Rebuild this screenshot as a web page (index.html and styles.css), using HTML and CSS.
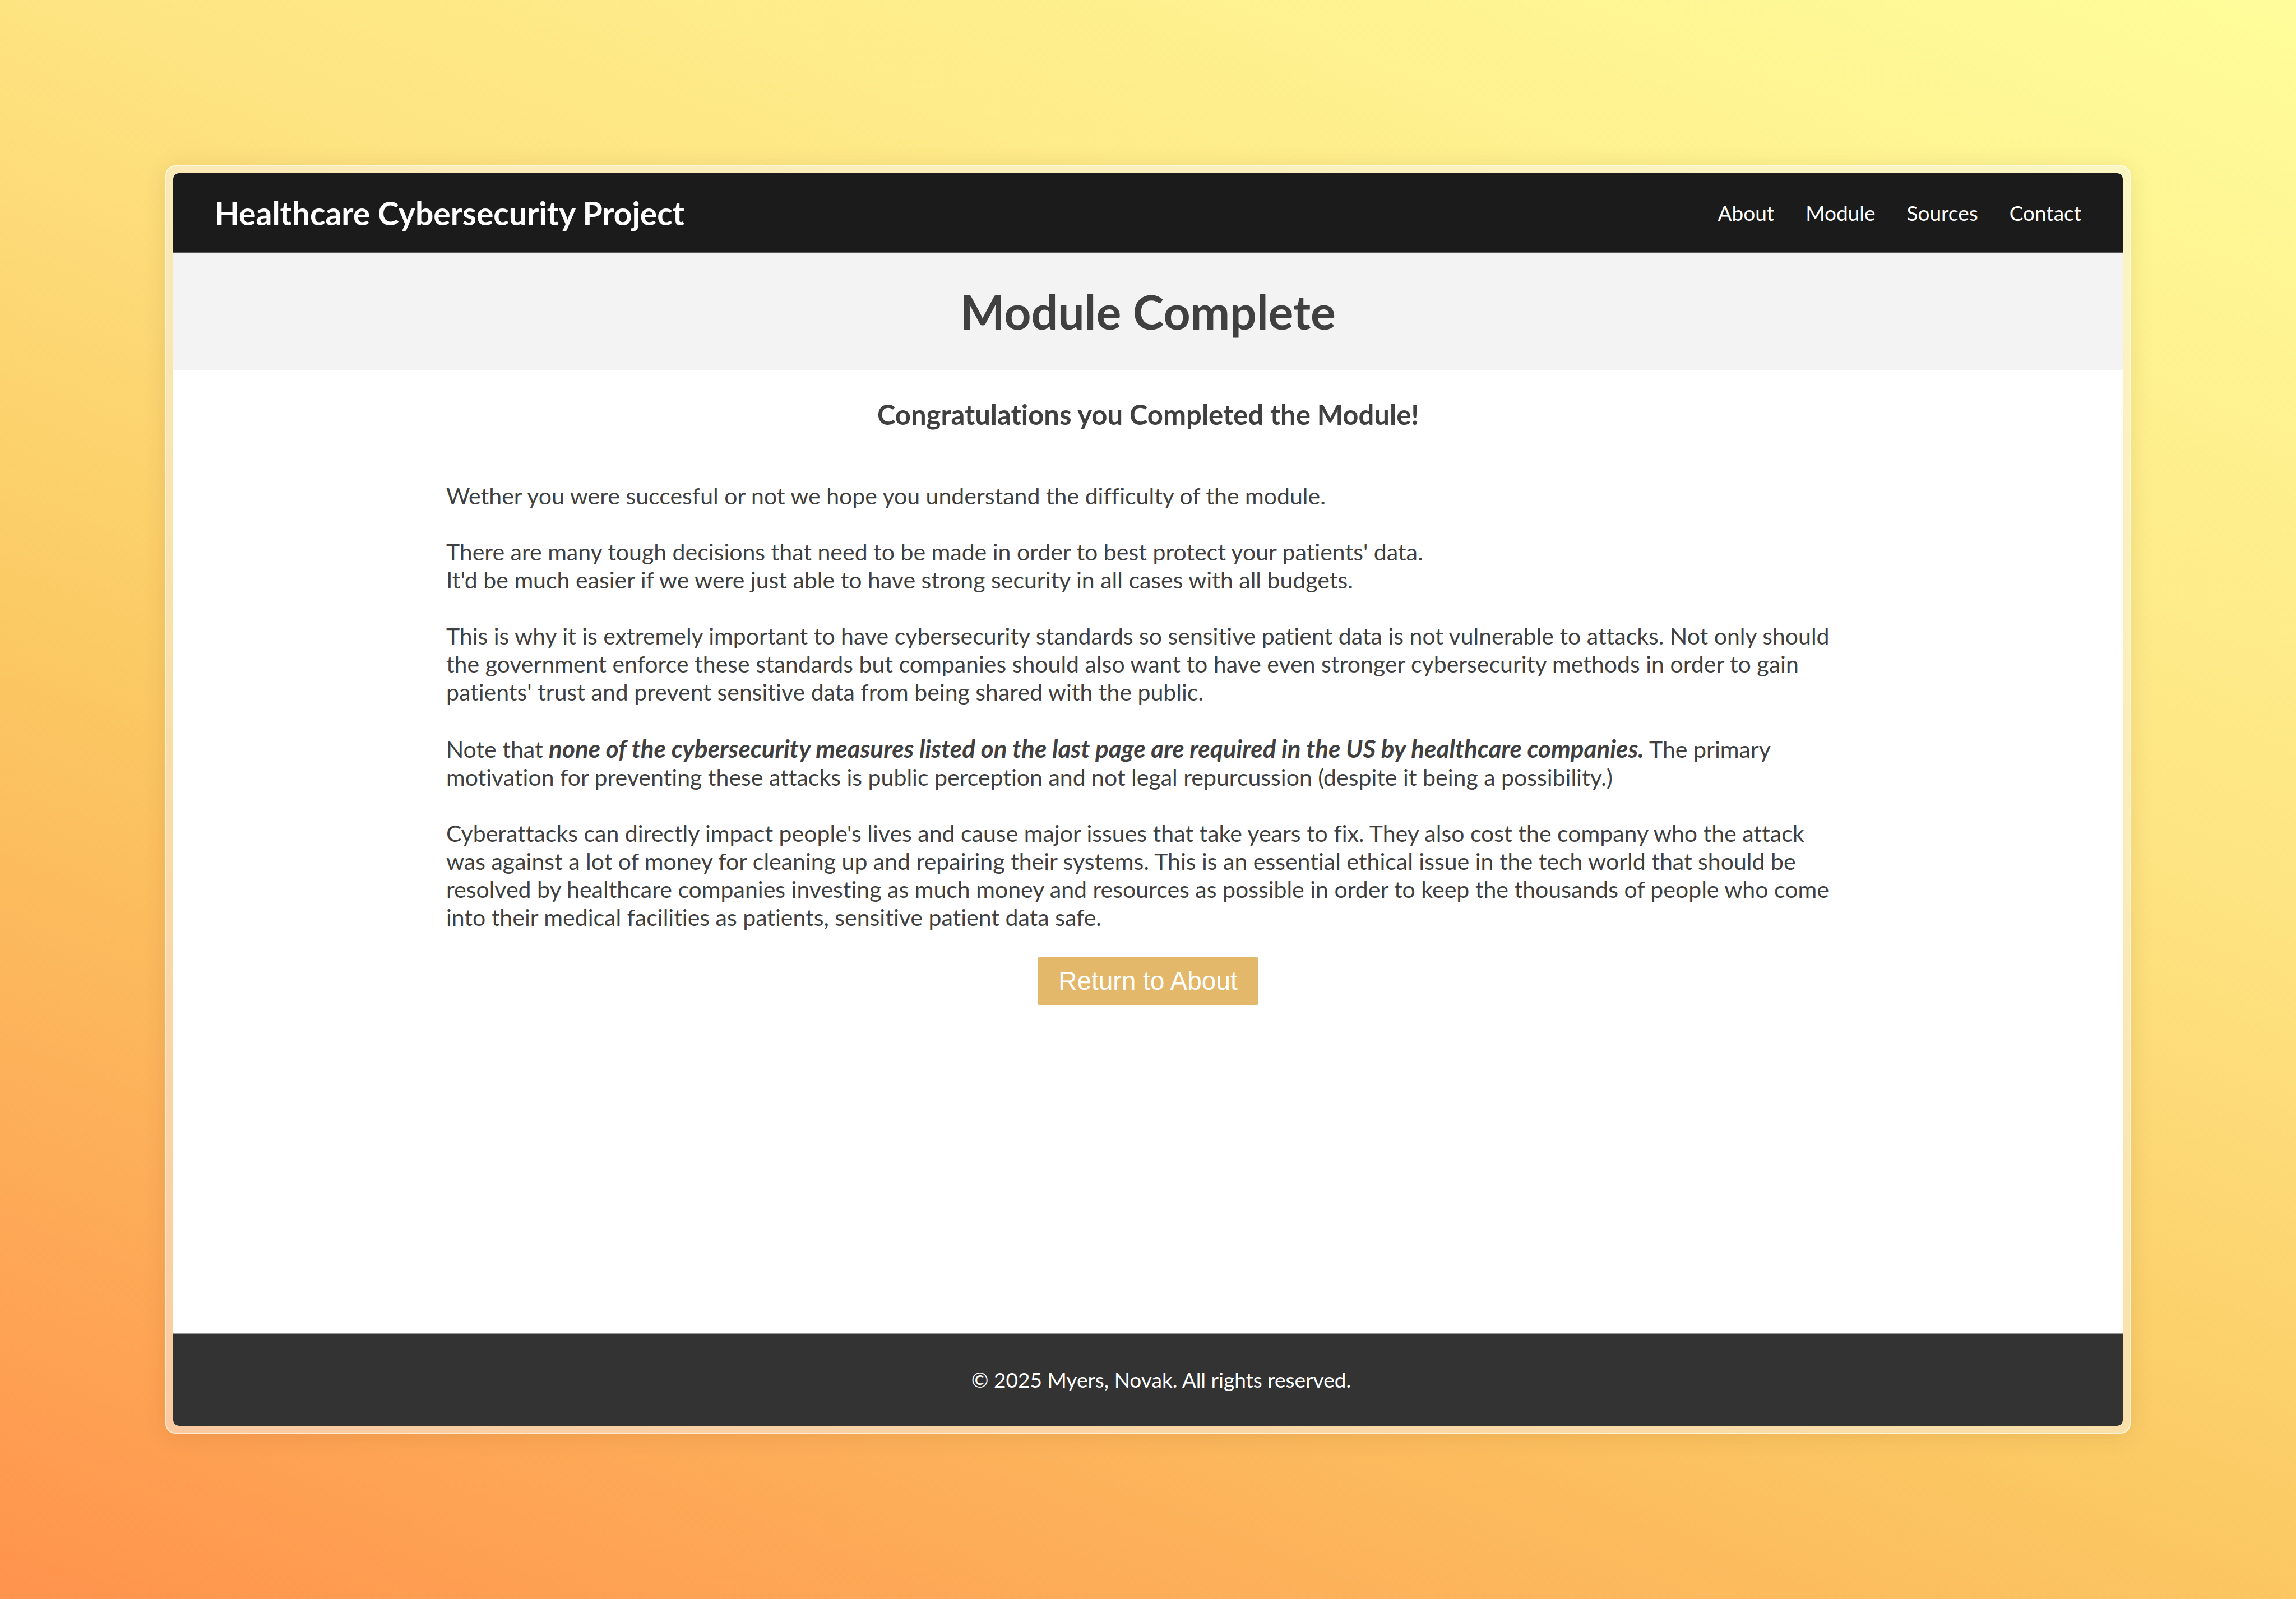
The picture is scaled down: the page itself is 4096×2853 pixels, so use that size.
FILE: index.html
```html
<!DOCTYPE html>
<html lang="en">
<head>
<meta charset="utf-8">
<meta name="viewport" content="width=device-width, initial-scale=1">
<title>Module Complete</title>
<link rel="stylesheet" href="styles.css">
</head>
<body>
<div class="frame">
  <div class="page">
    <header class="site-header">
      <a class="brand" href="#">Healthcare Cybersecurity Project</a>
      <nav class="site-nav">
        <a href="#about">About</a>
        <a href="#module">Module</a>
        <a href="#sources">Sources</a>
        <a href="#contact">Contact</a>
      </nav>
    </header>
    <div class="banner">
      <h1>Module Complete</h1>
    </div>
    <main class="content">
      <h2>Congratulations you Completed the Module!</h2>
      <div class="message">
        <p>Wether you were succesful or not we hope you understand the difficulty of the module.</p>
        <p>There are many tough decisions that need to be made in order to best protect your patients' data.<br>It'd be much easier if we were just able to have strong security in all cases with all budgets.</p>
        <p>This is why it is extremely important to have cybersecurity standards so sensitive patient data is not vulnerable to attacks. Not only should the government enforce these standards but companies should also want to have even stronger cybersecurity methods in order to gain patients' trust and prevent sensitive data from being shared with the public.</p>
        <p>Note that <strong class="key-point">none of the cybersecurity measures listed on the last page are required in the US by healthcare companies.</strong> The primary motivation for preventing these attacks is public perception and not legal repurcussion (despite it being a possibility.)</p>
        <p>Cyberattacks can directly impact people's lives and cause major issues that take years to fix. They also cost the company who the attack was against a lot of money for cleaning up and repairing their systems. This is an essential ethical issue in the tech world that should be resolved by healthcare companies investing as much money and resources as possible in order to keep the thousands of people who come into their medical facilities as patients, sensitive patient data safe.</p>
      </div>
      <button class="return" type="button">Return to About</button>
    </main>
    <footer class="site-footer">
      <p>© 2025 Myers, Novak. All rights reserved.</p>
    </footer>
  </div>
</div>
</body>
</html>
```

FILE: styles.css
```css
* {
  box-sizing: border-box;
}

body {
  margin: 0;
  min-height: 100vh;
  padding: 295px;
  display: flex;
  font-family: Lato, sans-serif;
  font-size: 41px;
  font-variant-ligatures: none;
  line-height: 50px;
  color: #404040;
  background: linear-gradient(22deg, #ff934d 0%, #fbca64 39%, #fee482 64%, #fffd9b 100%);
}

h1,
h2,
p {
  margin: 0;
}

.frame {
  flex: 1;
  display: flex;
  padding: 12px;
  border: 2px solid rgba(255, 255, 240, 0.6);
  border-radius: 18px;
  background: rgba(248, 244, 240, 0.5);
  box-shadow: 0 4px 40px rgba(90, 60, 0, 0.12);
}

.page {
  flex: 1;
  display: flex;
  flex-direction: column;
  overflow: hidden;
  border-radius: 10px;
  background: #fff;
}

.site-header {
  display: flex;
  align-items: center;
  justify-content: space-between;
  height: 142px;
  padding: 0 74px;
  border-bottom: 1px solid #555;
  background: #1b1b1b;
}

.brand {
  font-size: 57px;
  font-weight: 700;
  line-height: 68px;
  color: #fff;
  text-decoration: none;
}

.site-nav {
  display: flex;
  gap: 56px;
}

.site-nav a {
  font-size: 37px;
  color: #fff;
  text-decoration: none;
}

.banner {
  padding: 54px 0;
  text-align: center;
  background: #f3f3f3;
}

h1 {
  font-size: 84px;
  line-height: 102px;
}

.content {
  flex: 1;
  display: flex;
  flex-direction: column;
  align-items: center;
  padding: 48px 14%;
}

h2 {
  font-size: 49px;
  line-height: 60px;
}

.message {
  display: grid;
  gap: 50px;
  align-self: stretch;
  margin: 91px 0 45px;
  padding-right: 12px;
}

.key-point {
  font-size: 44px;
  font-style: italic;
}

.return {
  padding: 14px 36px;
  border: 1px solid #ccc;
  border-radius: 4px;
  font-family: "Liberation Sans", sans-serif;
  font-size: 46px;
  line-height: 57px;
  color: #fff;
  background: #e4b86b;
}

.site-footer {
  padding: 57px 0 57px 47px;
  border-top: 1px solid #999;
  font-size: 37px;
  text-align: center;
  color: #fff;
  background: #333;
}
```
